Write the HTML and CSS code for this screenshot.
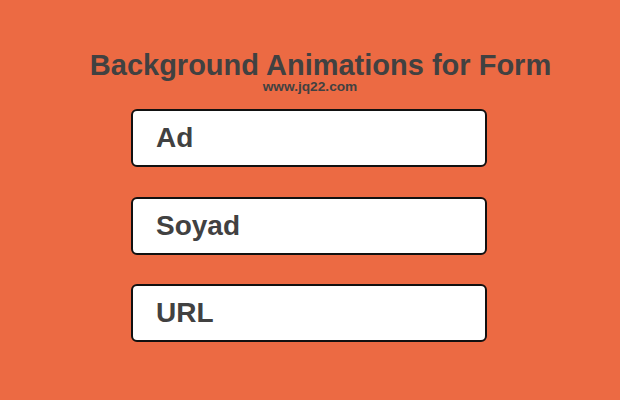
FILE: index.html
```html
<!DOCTYPE html>
<html>
<head>
<meta charset="utf-8">
<link rel="stylesheet" href="styles.css">
</head>
<body>
<div class="page">
  <h1 class="title">Background Animations for Form</h1>
  <div class="sub">www.jq22.com</div>
  <form class="form">
    <div class="field">Ad</div>
    <div class="field">Soyad</div>
    <div class="field">URL</div>
  </form>
</div>
</body>
</html>
```
FILE: styles.css
```css
html, body {
  margin: 0;
  padding: 0;
}
body {
  background: #ec6a43;
  width: 620px;
  height: 400px;
  overflow: hidden;
  font-family: "Liberation Sans", Arial, sans-serif;
  color: #414141;
}
.page {
  display: flex;
  flex-direction: column;
  align-items: center;
  padding-top: 50.5px;
}
.title {
  margin: 0 0 0 21px;
  font-size: 29px;
  font-weight: bold;
  line-height: 29px;
}
.sub {
  font-size: 13.7px;
  font-weight: bold;
  line-height: 14px;
  margin-top: 0.5px;
}
.form {
  display: flex;
  flex-direction: column;
  gap: 29.5px;
  margin: 15px 2px 0 0;
}
.field {
  box-sizing: border-box;
  width: 356px;
  height: 58px;
  background: #fff;
  border: 2px solid #111;
  border-radius: 6px;
  padding-left: 23px;
  font-size: 28px;
  font-weight: bold;
  line-height: 54px;
}
```
